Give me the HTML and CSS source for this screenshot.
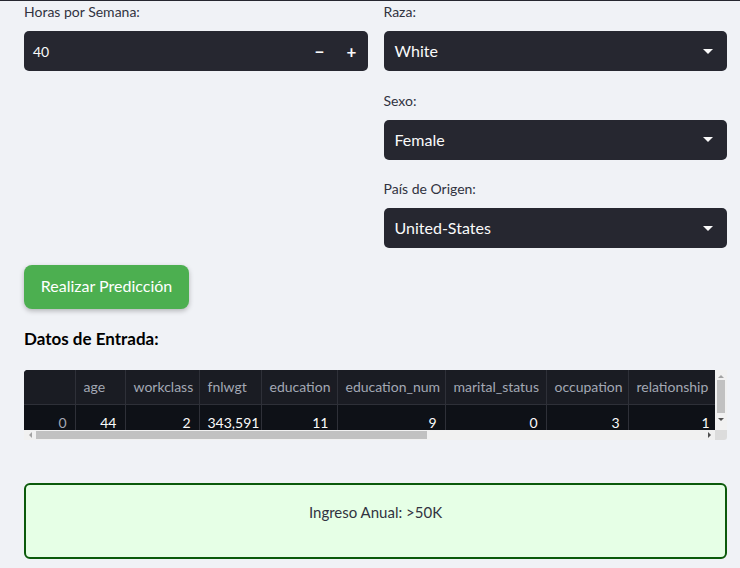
FILE: index.html
```html
<!DOCTYPE html>
<html lang="es">
<head>
<meta charset="utf-8">
<link rel="stylesheet" href="styles.css">
</head>
<body>
<div class="page">
  <div class="cols">
    <div class="col">
      <div class="field">
        <label class="lbl">Horas por Semana:</label>
        <div class="numinput">
          <span class="val">40</span>
          <span class="stepper">
            <span class="step">&minus;</span>
            <span class="step">+</span>
          </span>
        </div>
      </div>
    </div>
    <div class="col">
      <div class="field">
        <label class="lbl">Raza:</label>
        <div class="select"><span class="sval">White</span><span class="caret"></span></div>
      </div>
      <div class="field">
        <label class="lbl">Sexo:</label>
        <div class="select"><span class="sval">Female</span><span class="caret"></span></div>
      </div>
      <div class="field">
        <label class="lbl">País de Origen:</label>
        <div class="select"><span class="sval">United-States</span><span class="caret"></span></div>
      </div>
    </div>
  </div>

  <button class="btn">Realizar Predicción</button>

  <h3 class="sub">Datos de Entrada:</h3>

  <div class="df">
    <div class="df-view">
      <table class="tbl">
        <colgroup>
          <col class="c-idx"><col class="c-age"><col class="c-wc"><col class="c-fn"><col class="c-ed"><col class="c-en"><col class="c-ms"><col class="c-oc"><col class="c-rel">
        </colgroup>
        <thead>
          <tr><th></th><th>age</th><th>workclass</th><th>fnlwgt</th><th>education</th><th>education_num</th><th>marital_status</th><th>occupation</th><th>relationship</th></tr>
        </thead>
        <tbody>
          <tr><td class="idx">0</td><td>44</td><td>2</td><td>343,591</td><td>11</td><td>9</td><td>0</td><td>3</td><td>1</td></tr>
        </tbody>
      </table>
    </div>
    <div class="vscroll">
      <span class="arr up"></span>
      <span class="vthumb"></span>
      <span class="arr down"></span>
    </div>
    <div class="hscroll">
      <span class="arr left"></span>
      <span class="hthumb"></span>
      <span class="arr right"></span>
    </div>
    <div class="corner"></div>
  </div>

  <div class="result">Ingreso Anual: &gt;50K</div>
</div>
</body>
</html>
```

FILE: styles.css
```css
* { box-sizing: border-box; }
html, body { margin: 0; padding: 0; }
body {
  background: #f0f2f6;
  font-family: "Source Sans Pro", Lato, "Noto Sans", sans-serif;
  color: #31333f;
  border-top: 1px solid #262730;
  height: 568px;
  overflow: hidden;
}
.page { padding: 0 13px 0 24px; }
.cols {
  display: grid;
  grid-template-columns: 1fr 1fr;
  column-gap: 16px;
  align-items: start;
}
.col { display: flex; flex-direction: column; gap: 18.5px; }
.field { display: flex; flex-direction: column; }
.lbl {
  font-size: 14px;
  line-height: 21px;
  height: 21px;
  margin-bottom: 9px;
  color: #31333f;
}
.numinput, .select {
  height: 40px;
  background: #262730;
  border-radius: 5px;
  display: flex;
  align-items: center;
  color: #fafafa;
}
.numinput { padding-left: 9px; }
.val { font-size: 14px; flex: 1; }
.stepper { display: flex; }
.step {
  width: 32px;
  text-align: center;
  font-size: 17px;
  font-weight: 700;
  line-height: 1;
}
.select { padding: 0 12px 0 11px; }
.sval { flex: 1; font-size: 16px; padding-bottom: 1px; }
.caret {
  width: 0; height: 0;
  border-left: 5px solid transparent;
  border-right: 5px solid transparent;
  border-top: 5px solid #fafafa;
  margin-right: 2px;
}
.btn {
  display: block;
  margin-top: 16.5px;
  width: 165px;
  height: 44px;
  border: none;
  border-radius: 8px;
  background: #4caf50;
  color: #ffffff;
  font-family: inherit;
  font-size: 16px;
  box-shadow: 0 2px 5px rgba(0,0,0,0.25);
  padding: 0 0 2px 0;
}
.sub {
  margin: 18px 0 0 0;
  font-size: 17px;
  line-height: 24px;
  font-weight: 700;
  color: #000;
}
.df {
  margin-top: 19px;
  display: grid;
  grid-template-columns: 1fr 12px;
  grid-template-rows: 60px 10px;
}
.df-view {
  overflow: hidden;
  background: #0e1117;
  border-radius: 4px 0 0 0;
}
.tbl {
  border-collapse: collapse;
  table-layout: fixed;
  width: 694px;
  font-size: 14px;
}
.c-idx { width: 51px; }
.c-age { width: 50px; }
.c-wc { width: 74px; }
.c-fn { width: 62px; }
.c-ed { width: 76px; }
.c-en { width: 108px; }
.c-ms { width: 101px; }
.c-oc { width: 82px; }
.c-rel { width: 90px; }
.tbl th {
  height: 35px;
  background: #1a1c23;
  color: #a3a8b4;
  font-weight: 400;
  text-align: left;
  padding: 0 8px;
  border-right: 1px solid #2e3038;
  border-bottom: 1px solid #2e3038;
  white-space: nowrap;
}
.tbl td {
  height: 35px;
  color: #fafafa;
  text-align: right;
  padding: 0 8px;
  border-right: 1px solid #2e3038;
  white-space: nowrap;
}
.tbl td.idx { color: #a3a8b4; }
.vscroll {
  background: #f1f1f1;
  display: flex;
  flex-direction: column;
  align-items: center;
}
.vthumb {
  width: 8px;
  height: 33px;
  background: #c1c1c1;
  margin: 2px 0;
  flex: none;
}
.arr { width: 0; height: 0; flex: none; }
.arr.up {
  margin-top: 5px;
  border-left: 3px solid transparent;
  border-right: 3px solid transparent;
  border-bottom: 3px solid #a3a3a3;
}
.arr.down {
  margin-top: 3px;
  border-left: 3px solid transparent;
  border-right: 3px solid transparent;
  border-top: 3px solid #505050;
}
.hscroll {
  background: #f1f1f1;
  display: flex;
  align-items: center;
}
.arr.left {
  margin-left: 5px;
  border-top: 3px solid transparent;
  border-bottom: 3px solid transparent;
  border-right: 3px solid #a3a3a3;
}
.hthumb {
  margin-left: 4px;
  width: 391px;
  height: 8px;
  background: #c1c1c1;
}
.arr.right {
  margin-left: auto;
  margin-right: 4px;
  border-top: 3px solid transparent;
  border-bottom: 3px solid transparent;
  border-left: 3px solid #505050;
}
.corner { background: #dcdcdc; border-radius: 0 0 3px 0; }
.result {
  margin-top: 43px;
  height: 76px;
  background: #e6ffe6;
  border: 2px solid #0b5a0b;
  border-radius: 6px;
  display: flex;
  align-items: center;
  justify-content: center;
  font-size: 15px;
  color: #31333f;
  padding-bottom: 17px;
}
```
